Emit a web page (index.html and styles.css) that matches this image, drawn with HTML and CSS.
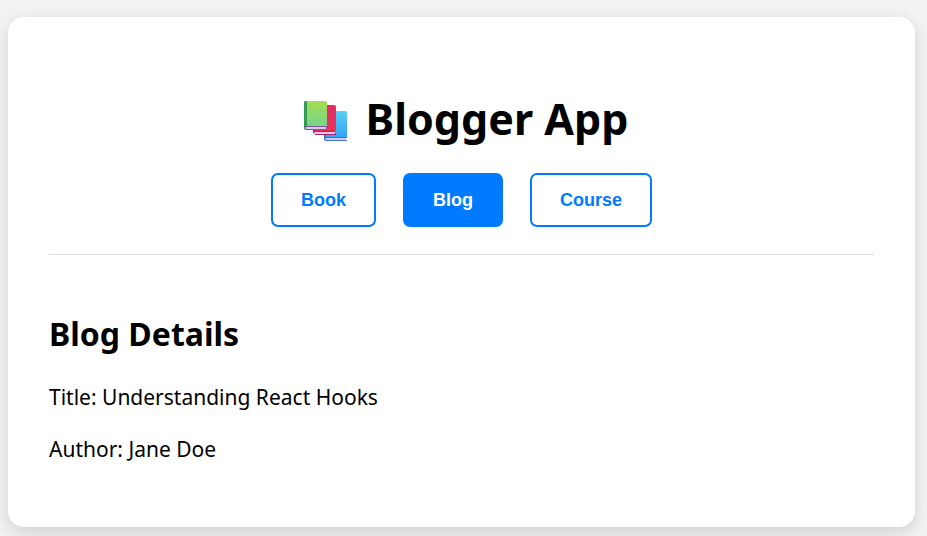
FILE: index.html
```html
<!DOCTYPE html>
<html lang="en">
<head>
<meta charset="utf-8">
<title>Blogger App</title>
<link rel="stylesheet" href="styles.css">
</head>
<body>
<main class="card">
  <header class="header">
    <h1 class="title">
      <svg class="books" viewBox="-7 -4 53 46" aria-hidden="true">
        <defs>
          <linearGradient id="green" x1="0" y1="0" x2="0" y2="1"><stop offset="0" stop-color="#a5dc50"/><stop offset="1" stop-color="#73d68c"/></linearGradient>
          <linearGradient id="red" x1="0" y1="0" x2="0" y2="1"><stop offset="0" stop-color="#df2b69"/><stop offset="1" stop-color="#ed3153"/></linearGradient>
          <linearGradient id="blue" x1="0" y1="0" x2="0" y2="1"><stop offset="0" stop-color="#58d0f7"/><stop offset="1" stop-color="#35a2f3"/></linearGradient>
        </defs>
        <path fill="#3b6fd0" d="M22 13h3v24h20v1h-1v2h1v1H24q-2 0-2-2z"/>
        <path fill="url(#blue)" d="M24 11h19q2 0 2 2v24H24z"/>
        <path fill="#d9c6f2" d="M24 38h20v2H24q-2-1 0-2z"/>
        <path fill="#a92565" d="M11 7h3v23h20v1h-1v2h1v1H13q-2 0-2-2z"/>
        <path fill="url(#red)" d="M13 5h19q2 0 2 2v24H13z"/>
        <path fill="#e4c4ee" d="M13 32h20v2H13q-2-1 0-2z"/>
        <path fill="#a92565" d="M13 34h21v1H13z"/>
        <path fill="#359a55" d="M2 2q0-1 2-1h1v25h19v4H4q-2 0-2-2z"/>
        <path fill="url(#green)" d="M5 1h18q2 0 2 2v23H5z"/>
        <path fill="#7d579b" d="M4 26h21v4H4q-2-2 0-4z"/>
        <path fill="#d9c8ef" d="M4 27h20v2H4q-1-1 0-2z"/>
      </svg>
      <span>Blogger App</span>
    </h1>
    <nav class="tabs">
      <button class="tab" type="button">Book</button>
      <button class="tab active" type="button">Blog</button>
      <button class="tab" type="button">Course</button>
    </nav>
  </header>
  <section class="details">
    <h2 class="heading">Blog Details</h2>
    <p class="line">Title: Understanding React Hooks</p>
    <p class="line">Author: Jane Doe</p>
  </section>
</main>
</body>
</html>
```
FILE: styles.css
```css
html {
  background: #f3f3f3;
}

body {
  margin: 0;
  padding: 17px 12px 9px 8px;
  color: #000;
  font-family: "Segoe UI", "Noto Sans", sans-serif;
}

.card {
  padding: 72px 41px 63px;
  border-radius: 16px;
  background: #fff;
  box-shadow: 0 6px 18px rgba(0, 0, 0, 0.14);
}

.header {
  padding-bottom: 27px;
  border-bottom: 1px solid #ddd;
}

.title {
  display: flex;
  justify-content: center;
  align-items: center;
  gap: 18px;
  margin: 0 0 24px;
  font-size: 43px;
  line-height: 60px;
}

.books {
  width: 53px;
  height: 46px;
}

.tabs {
  display: flex;
  justify-content: center;
  gap: 27px;
}

.tab {
  padding: 14px 28px;
  border: 2px solid #007bff;
  border-radius: 7px;
  background: #fff;
  color: #007bff;
  font: bold 18px/22px Arial, "Liberation Sans", sans-serif;
  cursor: pointer;
}

.tab.active {
  background: #007bff;
  color: #fff;
}

.heading {
  margin: 56px 0 25px;
  font-size: 32px;
  line-height: 46px;
}

.line {
  margin: 0 0 22px;
  font-size: 21px;
  line-height: 30px;
}

.line:last-child {
  margin-bottom: 0;
}
```
